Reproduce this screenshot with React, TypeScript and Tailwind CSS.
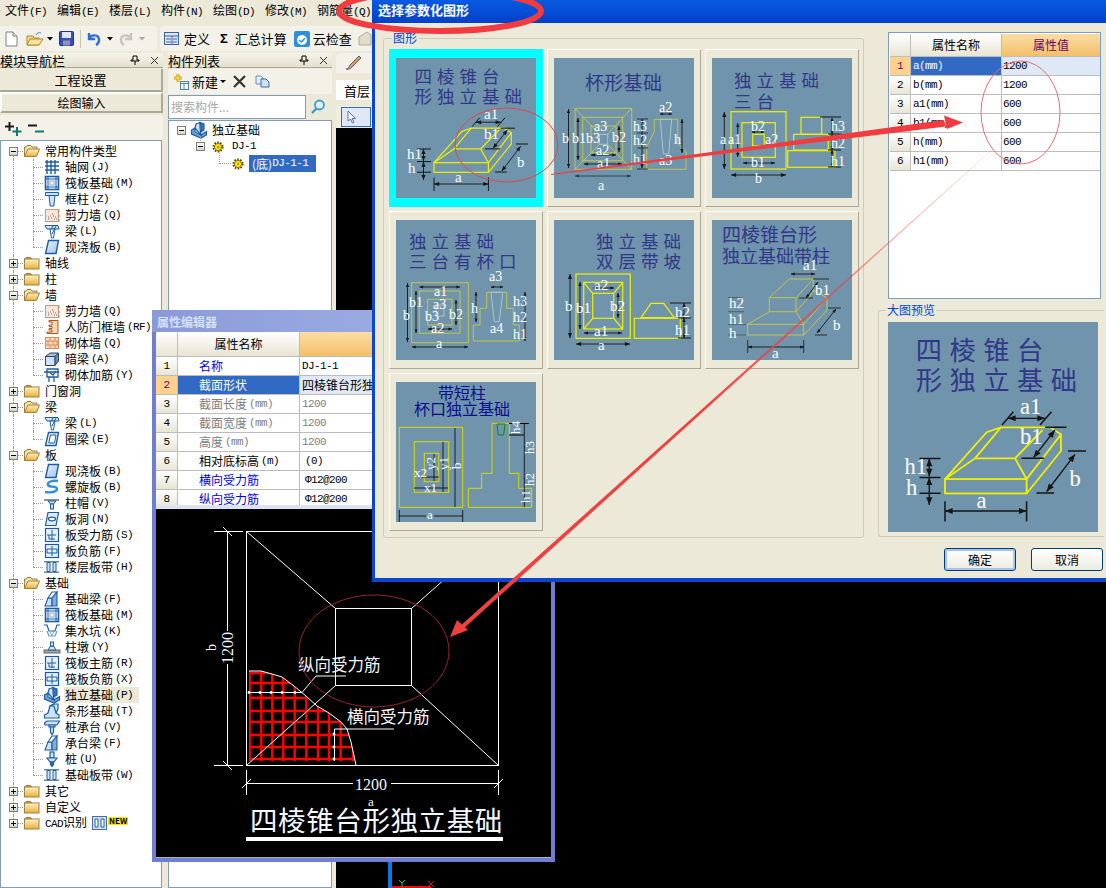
import React from "react";

const cjk = "font-['Noto_Sans_CJK_SC',sans-serif]";
const mono = "font-['Liberation_Mono',monospace] text-[11px] tracking-[-0.6px]";
const serif = "font-['Liberation_Serif',serif]";

// ---------- small diagram helpers ----------
const DIM = "#c4c44c";
const BRIGHT = "#f0f000";

function Box({ x1, y1, x2, y2, c = DIM, w = 1 }: { x1: number; y1: number; x2: number; y2: number; c?: string; w?: number }) {
    return <rect x={x1} y={y1} width={x2 - x1} height={y2 - y1} fill="none" stroke={c} strokeWidth={w} />;
}

function Ln({ d, c = DIM, w = 1 }: { d: string; c?: string; w?: number }) {
    return <path d={d} fill="none" stroke={c} strokeWidth={w} />;
}

function Dim({ x1, y1, x2, y2, c = "#151515", s = 3.4, w = 0.9 }: { x1: number; y1: number; x2: number; y2: number; c?: string; s?: number; w?: number }) {
    const a = Math.atan2(y2 - y1, x2 - x1);
    const head = (x: number, y: number, an: number) => {
        const bx = x + Math.cos(an) * s * 1.5;
        const by = y + Math.sin(an) * s * 1.5;
        const nx = -Math.sin(an) * s * 0.6;
        const ny = Math.cos(an) * s * 0.6;
        return `${x},${y} ${bx + nx},${by + ny} ${bx - nx},${by - ny}`;
    };
    return (
        <g>
            <line x1={x1} y1={y1} x2={x2} y2={y2} stroke={c} strokeWidth={w} />
            <polygon points={head(x1, y1, a)} fill={c} />
            <polygon points={head(x2, y2, a + Math.PI)} fill={c} />
        </g>
    );
}

function Lb({ x, y, t, s = 14, r }: { x: number; y: number; t: string; s?: number; r?: boolean }) {
    return (
        <text x={x} y={y} fontSize={s} fill="#fff" className={serif} transform={r ? `rotate(-90 ${x} ${y})` : undefined}>
            {t}
        </text>
    );
}

function Title({ x, y, t, s = 17.5, sp = 5, c = "#2c2f86" }: { x: number; y: number; t: string; s?: number; sp?: number; c?: string }) {
    return (
        <text x={x} y={y} fontSize={s} letterSpacing={sp} fill={c} opacity={0.9} className={cjk}>
            {t}
        </text>
    );
}

function Pic({ size = 140, children }: { size?: number; children: React.ReactNode }) {
    return (
        <svg width={size} height={size} viewBox="0 0 140 140" className="bg-[#7094ab] shrink-0">
            {children}
        </svg>
    );
}

function Frustum({ size }: { size?: number }) {
    return (
        <Pic size={size}>
            <Title x={18.5} y={25} t="四棱锥台" />
            <Title x={18.5} y={45} t="形独立基础" />
            <g stroke={BRIGHT} strokeWidth={1.2} fill="none">
                <rect x={38} y={104.7} width={54.4} height={9.6} />
                <path d="M38 104.7 L65.8 73.5 L75.3 70.2 L108 70.2 L115.3 74.9 L115.3 86 L92.4 114.3" />
                <path d="M38 104.7 L58 90.9 L84.7 90.9 L92.4 104.7 L115.3 74.9" />
                <path d="M58 90.9 L75.3 70.2 M84.7 90.9 L103 72" />
            </g>
            <g stroke="#151515" strokeWidth={1}>
                <path d="M21 91 H35 M21 103.6 H35 M21 114.2 H35 M38 119.5 V133 M92.4 119.5 V133 M76 68.7 L83.6 59.8 M101.3 68.7 L109 59.8 M104.7 70.2 H119 M89 90.9 H104 M120 86 H132 M99 114 H110.7" />
            </g>
            <Dim x1={27.5} y1={91} x2={27.5} y2={103} />
            <Dim x1={27.5} y1={103.6} x2={27.5} y2={122} />
            <Dim x1={38} y1={126} x2={92.4} y2={126} />
            <Dim x1={80} y1={64.2} x2={104.7} y2={64.2} />
            <Dim x1={111.3} y1={72} x2={97} y2={90.4} />
            <Dim x1={124.7} y1={88.2} x2={105.8} y2={113} />
            <Lb x={11} y={101} t="h1" s={15} />
            <Lb x={12} y={115} t="h" s={15} />
            <Lb x={59} y={124} t="a" s={15} />
            <Lb x={88} y={61} t="a1" s={15} />
            <Lb x={88} y={81} t="b1" s={15} />
            <Lb x={121} y={109} t="b" s={15} />
        </Pic>
    );
}

function Cup() {
    return (
        <Pic>
            <Title x={31} y={32} t="杯形基础" s={19} sp={0.3} />
            <Box x1={21} y1={50.3} x2={77.7} y2={111.3} />
            <Box x1={28.7} y1={59.3} x2={68.7} y2={102.7} />
            <Box x1={37} y1={68} x2={62} y2={94.7} />
            <Box x1={45.3} y1={76.3} x2={53.7} y2={86.3} c="#a5c8c8" />
            <Ln d="M21 50.3 L45.3 76.3 M77.7 50.3 L53.7 76.3 M21 111.3 L45.3 86.3 M77.7 111.3 L53.7 86.3" />
            <polygon points="100.3,61.3 123.7,61.3 123.7,85.3 132,93.7 132,111.3 92.7,111.3 92.7,88.7 100.3,73.7" fill="none" stroke={DIM} />
            <polygon points="106.3,61.3 117.7,61.3 114.7,96 109.3,96" fill="none" stroke="#a5c8c8" />
            <Dim x1={14.5} y1={51} x2={14.5} y2={110} s={2.6} />
            <Dim x1={24} y1={60} x2={24} y2={102} s={2.6} />
            <Dim x1={21} y1={118} x2={77} y2={118} s={2.6} c="#2a3a44" />
            <Dim x1={30} y1={106} x2={68} y2={106} s={2.6} />
            <Dim x1={37} y1={97} x2={62} y2={97} s={2.6} />
            <Dim x1={65} y1={68} x2={65} y2={94} s={2.6} />
            <Dim x1={88} y1={61} x2={88} y2={110} s={2.6} />
            <Dim x1={128} y1={61} x2={128} y2={95} s={2.6} />
            <Dim x1={106} y1={56} x2={118} y2={56} s={2} />
            <Ln d="M83 61 H94 M83 75 H94 M83 90 H94 M83 111 H94" c="#222" w={0.8} />
            <Lb x={8} y={85} t="b" />
            <Lb x={18} y={85} t="b1" />
            <Lb x={32} y={85} t="b3" />
            <Lb x={40} y={73} t="a3" />
            <Lb x={58} y={84} t="b2" />
            <Lb x={42} y={97} t="a2" />
            <Lb x={43} y={110} t="a1" />
            <Lb x={44} y={132} t="a" />
            <Lb x={79} y={73} t="h3" />
            <Lb x={79} y={87} t="h2" />
            <Lb x={79} y={106} t="h1" />
            <Lb x={105} y={54} t="a2" />
            <Lb x={120} y={86} t="h" />
            <Lb x={105} y={107} t="a3" />
        </Pic>
    );
}

function ThreeStep() {
    return (
        <Pic>
            <Title x={22} y={29} t="独立基础" />
            <Title x={22} y={50} t="三台" />
            <Box x1={19} y1={53.7} x2={74} y2={111} c={BRIGHT} w={1.2} />
            <Box x1={30} y1={64.7} x2={63.3} y2={99.3} c={BRIGHT} w={1.2} />
            <Box x1={40.7} y1={76.3} x2={52.3} y2={87.7} c={BRIGHT} w={1.2} />
            <Box x1={89} y1={59.3} x2={109.7} y2={76.3} c={BRIGHT} w={1.2} />
            <Box x1={81.7} y1={76.3} x2={116.3} y2={92} c={BRIGHT} w={1.2} />
            <Box x1={75.7} y1={92.7} x2={123} y2={109.3} c={BRIGHT} w={1.2} />
            <Dim x1={12.3} y1={54} x2={12.3} y2={111} />
            <Dim x1={25.7} y1={65} x2={25.7} y2={99} s={2.6} />
            <Dim x1={19} y1={117} x2={74} y2={117} />
            <Dim x1={31} y1={105} x2={63} y2={105} s={2.6} />
            <Dim x1={40} y1={74} x2={52} y2={74} s={2} />
            <Dim x1={120} y1={60} x2={120} y2={76} s={2.4} />
            <Dim x1={120} y1={76} x2={120} y2={92} s={2.4} />
            <Dim x1={120} y1={92} x2={120} y2={109} s={2.4} />
            <Ln d="M108 59 H129 M116 76 H129 M116 92 H129 M116 109 H129" c="#151515" />
            <Lb x={8} y={86} t="a" />
            <Lb x={16} y={86} t="a1" />
            <Lb x={39} y={73} t="b2" />
            <Lb x={53} y={86} t="a2" />
            <Lb x={39} y={109} t="b1" />
            <Lb x={43} y={125} t="b" />
            <Lb x={119} y={73} t="h3" />
            <Lb x={119} y={90} t="h2" />
            <Lb x={119} y={108} t="h1" />
        </Pic>
    );
}

function ThreeStepCup() {
    return (
        <Pic>
            <Title x={13} y={28} t="独立基础" />
            <Title x={13} y={48} t="三台有杯口" />
            <Box x1={15.7} y1={62.7} x2={72.3} y2={122.7} />
            <Box x1={23.3} y1={71} x2={64} y2={113.3} />
            <Box x1={31.7} y1={79.3} x2={56} y2={105} />
            <Box x1={40} y1={85} x2={48} y2={96} c="#a5c8c8" />
            <polygon points="90.7,72.3 110.7,72.3 110.7,88.3 117.3,88.3 117.3,105 123.3,105 123.3,121 77.3,121 77.3,105 84,105 84,88.3 90.7,88.3" fill="none" stroke={DIM} />
            <polygon points="95,72.3 106.7,72.3 103.3,101.7 98.3,101.7" fill="none" stroke="#a5c8c8" />
            <Dim x1={11.5} y1={63} x2={11.5} y2={122} s={2.6} />
            <Dim x1={20} y1={71} x2={20} y2={113} s={2.4} />
            <Dim x1={16} y1={127} x2={72} y2={127} s={2.4} />
            <Dim x1={23.5} y1={67} x2={64} y2={67} s={2.4} />
            <Dim x1={32} y1={109} x2={56} y2={109} s={2.4} />
            <Dim x1={60} y1={80} x2={60} y2={105} s={2.4} />
            <Dim x1={80} y1={72} x2={80} y2={102} s={2.4} />
            <Dim x1={95} y1={67} x2={107} y2={67} s={2} />
            <Dim x1={129} y1={72} x2={129} y2={121} s={2.4} />
            <Lb x={93} y={61} t="a3" />
            <Lb x={75} y={93} t="h" />
            <Lb x={117} y={86} t="h3" />
            <Lb x={117} y={102} t="h2" />
            <Lb x={117} y={119} t="h1" />
            <Lb x={94} y={113} t="a4" />
            <Lb x={38} y={76} t="a1" />
            <Lb x={13} y={87} t="b1" />
            <Lb x={37} y={89} t="a3" />
            <Lb x={29} y={101} t="b3" />
            <Lb x={53} y={99} t="b2" />
            <Lb x={35} y={113} t="a2" />
            <Lb x={7} y={100} t="b" />
            <Lb x={40} y={128} t="a" />
        </Pic>
    );
}

function TwoLayer() {
    return (
        <Pic>
            <Title x={42} y={28} t="独立基础" />
            <Title x={42} y={48} t="双层带坡" />
            <Box x1={22} y1={54} x2={76.3} y2={118.3} c={BRIGHT} w={1.2} />
            <Box x1={29.7} y1={62.3} x2={68.7} y2={109} c={BRIGHT} w={1.2} />
            <Box x1={38.7} y1={73.3} x2={59.7} y2={98.3} c={BRIGHT} w={1.2} />
            <Ln d="M29.7 62.3 L38.7 73.3 M68.7 62.3 L59.7 73.3 M29.7 109 L38.7 98.3 M68.7 109 L59.7 98.3" c={BRIGHT} w={1.2} />
            <Box x1={80.3} y1={98.3} x2={126.3} y2={118.3} c={BRIGHT} w={1.2} />
            <polygon points="87,97.7 97,83.3 109.7,83.3 120.3,97.7" fill="none" stroke={BRIGHT} strokeWidth={1.2} />
            <Dim x1={16} y1={54} x2={16} y2={118} />
            <Dim x1={26} y1={62} x2={26} y2={109} s={2.6} />
            <Dim x1={39} y1={68} x2={60} y2={68} s={2.4} />
            <Dim x1={64} y1={73} x2={64} y2={98} s={2.6} />
            <Dim x1={30} y1={113} x2={68} y2={113} s={2.6} />
            <Dim x1={22} y1={124} x2={76} y2={124} />
            <Dim x1={130} y1={83} x2={130} y2={98} s={2.6} />
            <Dim x1={130} y1={98} x2={130} y2={118} s={2.6} />
            <Ln d="M116 83 H137 M124 98 H137 M124 118 H137" c="#151515" />
            <Lb x={11} y={91} t="b" s={15} />
            <Lb x={22} y={93} t="b1" s={15} />
            <Lb x={40} y={70} t="a2" s={15} />
            <Lb x={56} y={91} t="b2" s={15} />
            <Lb x={40} y={116} t="a1" s={15} />
            <Lb x={44} y={130} t="a" s={15} />
            <Lb x={121} y={97} t="h2" s={15} />
            <Lb x={121} y={115} t="h1" s={15} />
        </Pic>
    );
}

function FrustumColumn() {
    return (
        <Pic>
            <Title x={10} y={22} t="四棱锥台形" s={19} sp={0} />
            <Title x={10} y={43} t="独立基础带柱" s={18} sp={0} />
            <Box x1={35.7} y1={104.3} x2={91.7} y2={115} />
            <Box x1={57.3} y1={77.7} x2={84} y2={91.7} />
            <Ln d="M57.3 77.7 L77.3 59 H101.3 L84 77.7 M101.3 59 V72 L84 91.7 M35.7 104.3 L57.3 91.7 M91.7 104.3 L84 91.7 M91.7 104.3 L115 78 L101 70 M115 78 V90 L91.7 115" />
            <Dim x1={79} y1={54} x2={103} y2={54} s={2.6} />
            <Dim x1={106} y1={62} x2={94} y2={78} s={2.6} />
            <Dim x1={124} y1={89} x2={105} y2={113} s={2.6} />
            <Dim x1={36} y1={127} x2={92} y2={127} s={2.6} />
            <Ln d="M35.7 120 V133 M91.7 120 V133 M101 59 H117 M87 78 H101 M116 88 H129 M103 115 H115" c="#151515" w={0.8} />
            <Ln d="M16 77.7 H30 M16 91.7 H32 M16 104.3 H34 M16 115 H34" c="#3b4a55" w={0.7} />
            <Lb x={91} y={50} t="a1" s={15} />
            <Lb x={17} y={88} t="h2" s={15} />
            <Lb x={17} y={104} t="h1" s={15} />
            <Lb x={17} y={118} t="h" s={15} />
            <Lb x={103} y={75} t="b1" s={15} />
            <Lb x={121} y={110} t="b" s={15} />
            <Lb x={60} y={138} t="a" s={15} />
        </Pic>
    );
}

function ShortColumn() {
    const blue = "#00008b";
    return (
        <Pic>
            <Title x={42} y={17} t="带短柱" s={16} sp={0} c={blue} />
            <Title x={18} y={33} t="杯口独立基础" s={16} sp={0} c={blue} />
            <Box x1={3.3} y1={45.3} x2={66.7} y2={125.3} c="#dada00" />
            <Box x1={18.3} y1={59.7} x2={52.7} y2={110.3} c="#dada00" />
            <Box x1={28.3} y1={71.3} x2={42.7} y2={99.7} c="#dada00" />
            <polygon points="96,41.3 113.3,41.3 113.3,91.3 122.7,91.3 122.7,106.3 135.7,106.3 135.7,125.3 72.3,125.3 72.3,106.3 85.7,106.3 85.7,91.3 96,91.3" fill="none" stroke="#dada00" />
            <polygon points="101,42 109,42 107.7,53 102.3,53" fill="none" stroke="#0a8a0a" />
            <Ln d="M113 41.5 H133 M113 53 H128" c="#000" />
            <Ln d="M59 46 V125 M47 60 V110 M38 72 V99 M128.3 41 V125 M18 106 H52 M26 95 H43 M3.3 128 V140 M66.7 128 V140 M3.3 134 H30 M38 134 H66.7" c="#000" w={0.8} />
            <Lb x={124} y={52} t="h4" s={13} r />
            <Lb x={138} y={72} t="h3" s={13} r />
            <Lb x={138} y={104} t="h2" s={13} r />
            <Lb x={134} y={121} t="h1" s={13} r />
            <Lb x={65} y={87} t="b" s={13} r />
            <Lb x={52} y={88} t="y1" s={13} r />
            <Lb x={39} y={88} t="y2" s={13} r />
            <Lb x={18} y={95} t="x2" s={13} />
            <Lb x={28} y={110} t="x1" s={13} />
            <Lb x={31} y={137} t="a" s={13} />
        </Pic>
    );
}

// ---------- tree icons ----------
const B = "#1b5ca8";
const L = "#cfe3f7";

const treeIcons: Record<string, React.ReactNode> = {
    grid: <path d="M1 3H15M1 7H15M1 11H15M3 1V15M7 1V15M11 1V15" stroke={B} strokeWidth={1.4} />,
    raft: (
        <g fill="none" stroke={B}>
            <rect x="1.5" y="1.5" width="13" height="13" strokeWidth={1.6} />
            <path d="M4 1V15M12 1V15M1 4H15M1 12H15" />
            <rect x="6" y="6" width="4" height="4" stroke="#8ab" />
        </g>
    ),
    column: (
        <g stroke={B} fill={L}>
            <path d="M1.5 1.5H14.5V4.5H1.5Z" />
            <path d="M5 4.5H11L9.8 15H6.2Z" />
        </g>
    ),
    wall: (
        <g>
            <rect x="1.5" y="2.5" width="13" height="12" fill="#f4e6da" stroke="#c89a7a" />
            <path d="M4 12h1M7 11h1M10 12h1M6 9h1M9 9h1M11 10h1M4 10h1M8 7h1M12 12h1" stroke="#777" />
            <path d="M15 3v2M15 8v2M15 12v2" stroke="#e0701c" />
        </g>
    ),
    beam: (
        <g stroke={B} fill={L}>
            <path d="M1 2.5H14L15 6H3Z" />
            <path d="M6 6H11L9.5 15H7.5Z" fill="#fff" />
            <path d="M9.5 2.5L7 6M12 3L8 11" />
        </g>
    ),
    slab: <path d="M4.5 1.5H14.5L12 14.5H1.5Z" fill="url(#slabFill)" stroke={B} strokeWidth={1.4} />,
    door: <path d="M5 1.5H14V14.5H3V13H8V11H5V9.5H8V7.5H5V6H8V3H5Z" fill="#f1d9b4" stroke="#b8541a" />,
    brick: (
        <g fill="#f7d9c0" stroke="#e08a50">
            <rect x="1.5" y="2.5" width="13" height="11" />
            <path d="M1.5 6H14.5M1.5 10H14.5M6 2.5V6M11 2.5V6M4 6V10M9 6V10M13 6V10M6 10V13.5M11 10V13.5" fill="none" />
        </g>
    ),
    darkbeam: (
        <g stroke="#345" fill={L}>
            <path d="M1.5 5.5L6 2H14.5L11 5.5Z" fill="#9fc3e6" />
            <path d="M1.5 5.5H11V14.5H1.5Z" />
            <path d="M11 5.5L14.5 2V10L11 14.5Z" fill="#5a8fc8" />
        </g>
    ),
    rebar: (
        <g fill="none" stroke={B} strokeWidth={1.3}>
            <path d="M0 5H15M3 2H14V10H3Z" />
            <path d="M5 10V15M10 10V15M5 5L9 8L12 4" />
        </g>
    ),
    ring: (
        <g fill="#e8f2fb" stroke={B} strokeWidth={1.4}>
            <path d="M4.5 1.5H14.5L12 14.5H1.5Z" />
            <path d="M6.5 4H12L10.5 12H4.8Z" fill="#fff" strokeWidth={1} />
        </g>
    ),
    spiral: <path d="M14 2C8 1 3 3 4 6C5 9 13 6 13 10C13 13 6 14 1 13" fill="none" stroke="#2f8fe0" strokeWidth={2.4} />,
    cap: (
        <g>
            <rect x="0" y="4" width="15" height="2" fill="#909090" />
            <path d="M4 6H12L9.5 9H6.5Z" fill={L} stroke={B} />
            <rect x="6.5" y="9" width="3" height="5" fill={L} stroke={B} />
        </g>
    ),
    hole: (
        <g stroke={B} strokeWidth={1.2}>
            <path d="M4 1.5H14.5L12 14.5H1.5Z" fill="#dcebfa" />
            <ellipse cx="8" cy="8" rx="3.5" ry="1.8" fill="#fff" />
        </g>
    ),
    bar: (
        <g fill="#e8f2fb" stroke={B}>
            <rect x="1.5" y="1.5" width="13" height="13" strokeWidth={1.2} />
            <path d="M8 3V13M3 8H12M5 8V12H11" fill="none" />
        </g>
    ),
    neg: (
        <g fill="#e8f2fb" stroke={B}>
            <rect x="1.5" y="1.5" width="13" height="13" strokeWidth={1.2} />
            <path d="M3 6H13V10H3ZM8 3V13" fill="none" />
        </g>
    ),
    strip: (
        <g>
            <rect x="0" y="2" width="15" height="1.5" fill="#6b85a5" />
            <rect x="0" y="12.5" width="15" height="1.5" fill="#6b85a5" />
            <path d="M3 3.5H6V12.5H3ZM9 3.5H12V12.5H9Z" fill={L} stroke={B} />
        </g>
    ),
    fbeam: (
        <g stroke={B} fill={L} strokeWidth={1.1}>
            <path d="M1 15L4 7H8V15Z" />
            <path d="M4 7L8 1H13L8 7Z" fill="#fff" />
            <path d="M8 7L13 1V15H8Z" fill="#7eaede" />
        </g>
    ),
    pit: (
        <g fill="none" stroke={B} strokeWidth={1.2}>
            <path d="M0 2H3L5 8H11L13 2H16" />
            <path d="M3 8L5 13H11L13 8" stroke="#5a9ad8" />
            <path d="M6 10h1M8 11h1M9 9h1M7 12h1" stroke="#457" />
        </g>
    ),
    pier: (
        <g>
            <rect x="0" y="11" width="16" height="3" fill="#a4a4a4" stroke="#666" />
            <path d="M4 11L6.5 7H9.5L12 11Z" fill={L} stroke={B} />
            <rect x="6.5" y="3" width="3" height="4" fill={L} stroke={B} />
        </g>
    ),
    iso: (
        <g stroke={B} strokeWidth={1.2}>
            <path d="M0.5 8L4 6V10L10 13L15.5 9.5V13L10 16L0.5 12Z" fill="#6fa3d8" />
            <path d="M4 6L5 2L9 .5V6L10 13Z" fill={L} />
            <path d="M9 .5L13 2V8L10 10V4Z" fill="#3a78c0" />
        </g>
    ),
    stripf: (
        <g stroke={B} fill={L} strokeWidth={1.2}>
            <path d="M0.5 15V12L4 10L6 3L10 1H14V6L12 10L15 12V15Z" />
            <path d="M6 3H10L12 10M10 1L6 3" fill="none" />
        </g>
    ),
    pilecap: (
        <g stroke={B} fill={L} strokeWidth={1.2}>
            <path d="M0.5 4L3 2H15.5L13 6H1Z" />
            <path d="M5 6H11V8H5Z" />
            <path d="M6.5 8H9.5V13L8 15.5L6.5 13Z" />
        </g>
    ),
    pile: (
        <g stroke={B} fill={L} strokeWidth={1.2}>
            <rect x="6" y="1" width="4" height="6" />
            <path d="M3 7H13L10 11H6Z" />
            <path d="M6.5 11H9.5V13.5L8 15.5L6.5 13.5Z" fill="#2f6fb8" />
        </g>
    ),
};

function TreeIcon({ k }: { k: string }) {
    return (
        <svg width="16" height="16" viewBox="0 0 16 16" className="shrink-0 overflow-visible">
            <defs>
                <linearGradient id="slabFill" x1="0" y1="0" x2="1" y2="1">
                    <stop offset="0" stopColor="#eaf3fc" />
                    <stop offset="1" stopColor="#9cc4ec" />
                </linearGradient>
            </defs>
            {treeIcons[k]}
        </svg>
    );
}

function Gear() {
    return (
        <svg width="12" height="12" viewBox="0 0 12 12" className="shrink-0">
            <circle cx="6" cy="6" r="4.6" fill="none" stroke="#5a4a00" strokeWidth={2} strokeDasharray="1.6 1.3" />
            <circle cx="6" cy="6" r="3.6" fill="#ffe800" stroke="#6a5a00" strokeWidth={0.8} />
            <circle cx="6" cy="6" r="1.2" fill="#b89a00" />
        </svg>
    );
}

function Folder({ open }: { open: boolean }) {
    return (
        <svg width="16" height="14" viewBox="0 0 16 14" className="shrink-0">
            <defs>
                <linearGradient id="folderFill" x1="0" y1="0" x2="0" y2="1">
                    <stop offset="0" stopColor="#fff2c0" />
                    <stop offset="1" stopColor="#e8b040" />
                </linearGradient>
            </defs>
            {open ? (
                <>
                    <path d="M.5 12.5V3H2L3 1.5H7L8 3H13V5" fill="#f4e2a4" stroke="#a08040" />
                    <path d="M.5 12.5L4 5H15.5L12.5 12.5Z" fill="url(#folderFill)" stroke="#a08040" />
                </>
            ) : (
                <>
                    <path d="M.5 3L2 1.5H6.5L8 3Z" fill="#e6c870" stroke="#a08040" />
                    <rect x=".5" y="3" width="14.5" height="10" fill="url(#folderFill)" stroke="#a08040" />
                </>
            )}
        </svg>
    );
}

function Expander({ open }: { open: boolean }) {
    return (
        <span className="relative z-10 block h-[9px] w-[9px] border border-[#7f7f7f] bg-gradient-to-b from-white to-[#d8d4c4]">
            <span className="absolute left-[1px] top-[3px] h-px w-[5px] bg-black" />
            {!open && <span className="absolute left-[3px] top-[1px] h-[5px] w-px bg-black" />}
        </span>
    );
}

// ---------- left tree data ----------
type Item = { name: string; code: string; icon: string };
type Group = { name: string; open: boolean; items?: Item[]; extra?: boolean };

const groups: Group[] = [
    {
        name: "常用构件类型",
        open: true,
        items: [
            { name: "轴网", code: "(J)", icon: "grid" },
            { name: "筏板基础", code: "(M)", icon: "raft" },
            { name: "框柱", code: "(Z)", icon: "column" },
            { name: "剪力墙", code: "(Q)", icon: "wall" },
            { name: "梁", code: "(L)", icon: "beam" },
            { name: "现浇板", code: "(B)", icon: "slab" },
        ],
    },
    { name: "轴线", open: false },
    { name: "柱", open: false },
    {
        name: "墙",
        open: true,
        items: [
            { name: "剪力墙", code: "(Q)", icon: "wall" },
            { name: "人防门框墙", code: "(RF)", icon: "door" },
            { name: "砌体墙", code: "(Q)", icon: "brick" },
            { name: "暗梁", code: "(A)", icon: "darkbeam" },
            { name: "砌体加筋", code: "(Y)", icon: "rebar" },
        ],
    },
    { name: "门窗洞", open: false },
    {
        name: "梁",
        open: true,
        items: [
            { name: "梁", code: "(L)", icon: "beam" },
            { name: "圈梁", code: "(E)", icon: "ring" },
        ],
    },
    {
        name: "板",
        open: true,
        items: [
            { name: "现浇板", code: "(B)", icon: "slab" },
            { name: "螺旋板", code: "(B)", icon: "spiral" },
            { name: "柱帽", code: "(V)", icon: "cap" },
            { name: "板洞", code: "(N)", icon: "hole" },
            { name: "板受力筋", code: "(S)", icon: "bar" },
            { name: "板负筋", code: "(F)", icon: "neg" },
            { name: "楼层板带", code: "(H)", icon: "strip" },
        ],
    },
    {
        name: "基础",
        open: true,
        items: [
            { name: "基础梁", code: "(F)", icon: "fbeam" },
            { name: "筏板基础", code: "(M)", icon: "raft" },
            { name: "集水坑", code: "(K)", icon: "pit" },
            { name: "柱墩", code: "(Y)", icon: "pier" },
            { name: "筏板主筋", code: "(R)", icon: "bar" },
            { name: "筏板负筋", code: "(X)", icon: "neg" },
            { name: "独立基础", code: "(P)", icon: "iso" },
            { name: "条形基础", code: "(T)", icon: "stripf" },
            { name: "桩承台", code: "(V)", icon: "pilecap" },
            { name: "承台梁", code: "(F)", icon: "fbeam" },
            { name: "桩", code: "(U)", icon: "pile" },
            { name: "基础板带", code: "(W)", icon: "strip" },
        ],
    },
    { name: "其它", open: false },
    { name: "自定义", open: false },
    { name: "识别", open: false, extra: true },
];

const dots = "border-dotted border-[#9a9a9a]";

function NavTree() {
    return (
        <div className="h-full border border-[#7f9db9] bg-white pt-[2px]">
            {groups.map((g, gi) => {
                const lastGroup = gi === groups.length - 1;
                return (
                    <div key={gi}>
                        <div className="relative flex h-4 items-center">
                            <div className={`absolute left-[12px] w-0 border-l ${dots} ${gi === 0 ? "top-2" : "top-0"} ${lastGroup ? "bottom-2" : "bottom-0"}`} />
                            <div className={`absolute left-[12px] top-2 w-[12px] border-t ${dots}`} />
                            <div className="ml-[8px] w-[15px]">
                                <Expander open={g.open} />
                            </div>
                            <Folder open={g.open} />
                            <span className="ml-[5px] whitespace-nowrap">
                                {g.extra && <span className={mono}>CAD</span>}
                                {g.name}
                            </span>
                            {g.extra && (
                                <>
                                    <svg width="15" height="14" viewBox="0 0 15 14" className="ml-[5px]">
                                        <rect x=".5" y=".5" width="14" height="13" fill="#cfe3f7" stroke="#4a6a9a" />
                                        <path d="M3 3H6V11H3ZM9 3H12V11H9Z" fill="#fff" stroke="#1b5ca8" />
                                    </svg>
                                    <span className="ml-[1px] -mt-[5px] bg-[#ffe600] px-[1px] text-[8px] font-bold leading-[8px] text-black">NEW</span>
                                </>
                            )}
                        </div>
                        {g.items?.map((it, i) => {
                            const last = i === g.items!.length - 1;
                            return (
                                <div key={i} className="relative flex h-4 items-center">
                                    <div className={`absolute left-[12px] top-0 bottom-0 border-l ${dots}`} />
                                    <div className={`absolute left-[32px] top-0 border-l ${dots} ${last ? "bottom-2" : "bottom-0"}`} />
                                    <div className={`absolute left-[32px] top-2 w-[10px] border-t ${dots}`} />
                                    <div className="ml-[43px]">
                                        <TreeIcon k={it.icon} />
                                    </div>
                                    <span className={`ml-[4px] flex h-4 items-center whitespace-nowrap pl-[1px] pr-[6px] ${it.name === "独立基础" ? "bg-[#ece9d8]" : ""}`}>
                                        {it.name}
                                        <span className={`${mono} ml-[2px]`}>{it.code}</span>
                                    </span>
                                </div>
                            );
                        })}
                    </div>
                );
            })}
        </div>
    );
}

function PanelHeader({ title }: { title: string }) {
    return (
        <div className="flex h-[15px] items-center border-b border-[#aca899] bg-gradient-to-b from-[#f6f4ea] to-[#e4e0cd]">
            <span className="flex-1 text-[13px] whitespace-nowrap">{title}</span>
            <svg width="10" height="10" viewBox="0 0 10 10" className="mr-[10px]">
                <path d="M3 1H7V5H9V6H1V5H3ZM5 6V10" fill="none" stroke="#000" />
            </svg>
            <svg width="9" height="9" viewBox="0 0 9 9" className="mr-[4px]">
                <path d="M1 1L8 8M8 1L1 8" stroke="#333" />
            </svg>
        </div>
    );
}

function NavPanel() {
    return (
        <div className="flex h-full w-[163px] shrink-0 flex-col">
            <PanelHeader title="模块导航栏" />
            <button className="mt-[1px] h-[23px] shrink-0 border-b-2 border-r-2 border-[#aca899] border-t-white bg-[#ece9d8] text-[13px]">工程设置</button>
            <button className="h-[21px] shrink-0 border-2 border-b-[#aca899] border-l-white border-r-[#aca899] border-t-white bg-[#ece9d8] text-[12px]">绘图输入</button>
            <div className="mt-[2px] flex h-[25px] shrink-0 items-center gap-[6px] rounded-t bg-[#f4f2e8] pl-[5px]">
                <svg width="17" height="16" viewBox="0 0 17 16">
                    <path d="M4.5 2V11M0 6.5H9" stroke="#1a1a1a" strokeWidth={2} />
                    <path d="M12 7V16M7.5 11.5H16.5" stroke="#0a7a70" strokeWidth={2} />
                </svg>
                <svg width="17" height="16" viewBox="0 0 17 16">
                    <path d="M0 5.5H9" stroke="#1a1a1a" strokeWidth={2} />
                    <path d="M7 11.5H16" stroke="#0a7a70" strokeWidth={2} />
                </svg>
            </div>
            <div className="min-h-0 flex-1 pr-[1px]">
                <NavTree />
            </div>
        </div>
    );
}

function ListPanel() {
    return (
        <div className="ml-[5px] flex h-full w-[164px] shrink-0 flex-col">
            <PanelHeader title="构件列表" />
            <div className="mt-[1px] flex h-[25px] shrink-0 items-center rounded-t bg-[#f4f2e8] pl-[5px]">
                <svg width="16" height="18" viewBox="0 0 16 18">
                    <path d="M5 1V9M1 5H9" stroke="#c8a010" strokeWidth={3} />
                    <path d="M5 1V9M1 5H9" stroke="#fff060" strokeWidth={1} />
                    <rect x="7.5" y="8.5" width="8" height="8" fill="#fff" stroke="#4a80c0" />
                    <path d="M8 10.5H15M11 11V16" stroke="#4a80c0" />
                </svg>
                <span className="ml-[3px] text-[13px]">新建</span>
                <span className="ml-[2px] h-0 w-0 border-x-[3px] border-t-[3px] border-x-transparent border-t-black" />
                <svg width="13" height="13" viewBox="0 0 13 13" className="ml-[7px]">
                    <path d="M1 1L12 12M12 1L1 12" stroke="#333" strokeWidth={2.2} />
                </svg>
                <svg width="15" height="13" viewBox="0 0 15 13" className="ml-[9px]">
                    <path d="M1 1H6L8 3V9H1Z" fill="#e4eefa" stroke="#6a8ab8" />
                    <path d="M6 4H11L14 7V12H6Z" fill="#cfe0f5" stroke="#3a68a8" />
                </svg>
            </div>
            <div className="flex h-[26px] shrink-0 items-center">
                <div className="flex h-[24px] w-[138px] items-center border border-[#7f9db9] bg-white pl-[2px] text-[#a8a8a8]">搜索构件...</div>
                <svg width="16" height="16" viewBox="0 0 16 16" className="ml-[4px]">
                    <circle cx="9.5" cy="6" r="4.5" fill="#dff1ff" stroke="#3a9ad8" strokeWidth={1.8} />
                    <path d="M6.5 9.5L2 14" stroke="#3a9ad8" strokeWidth={2.4} />
                </svg>
            </div>
            <div className="min-h-0 flex-1 border border-[#7f9db9] bg-white pt-[1px]">
                <div className="relative flex h-[16px] items-center pl-[8px]">
                    <Expander open />
                    <div className="ml-[5px]">
                        <TreeIcon k="iso" />
                    </div>
                    <span className="ml-[5px]">独立基础</span>
                </div>
                <div className="relative flex h-[17px] items-center pl-[27px]">
                    <div className={`absolute left-[31px] -top-px bottom-2 border-l ${dots}`} />
                    <Expander open />
                    <span className="ml-[7px]">
                        <Gear />
                    </span>
                    <span className={`${mono} ml-[8px]`}>DJ-1</span>
                </div>
                <div className="relative flex h-[17px] items-center pl-[63px]">
                    <div className={`absolute left-[50px] -top-2 bottom-2 border-l ${dots}`} />
                    <div className={`absolute left-[50px] top-2 w-[12px] border-t ${dots}`} />
                    <Gear />
                    <span className="ml-[5px] flex h-[17px] w-[67px] items-center bg-[#316ac5] pl-[3px] text-white">
                        (底)<span className={mono}>DJ-1-1</span>
                    </span>
                </div>
            </div>
        </div>
    );
}

function CadArea() {
    return (
        <div className="ml-[4px] flex h-full min-w-0 flex-1 flex-col">
            <div className="flex h-[20px] shrink-0 items-center rounded-tl bg-[#f4f2e8] pl-[8px]">
                <svg width="18" height="16" viewBox="0 0 18 16">
                    <path d="M2 14C4 14 5 12 6 10L15 1L17 3L8 12C7 13 5 15 2 14Z" fill="#d8a050" stroke="#5a5a90" />
                </svg>
            </div>
            <div className="mt-[7px] flex h-[20px] shrink-0 items-center bg-white pl-[8px] text-[13px]">首层</div>
            <div className="mt-[6px] flex h-[22px] shrink-0 items-center bg-[#f0eee0] pl-[5px]">
                <div className="flex h-[20px] w-[30px] items-center border border-[#316ac5] bg-[#dfe8f6] pl-[5px]">
                    <svg width="10" height="14" viewBox="0 0 10 14">
                        <path d="M1 1V11L3.5 9L5.5 13L7 12L5 8.5H8.5Z" fill="#fff" stroke="#6070a0" />
                    </svg>
                </div>
            </div>
            <div className="min-h-0 flex-1 bg-black" />
        </div>
    );
}

// ---------- property window ----------
const propRows = [
    { n: "名称", v: "DJ-1-1", c: "text-[#0000ee]" },
    { n: "截面形状", v: "四棱锥台形独立基础", sel: true },
    { n: "截面长度", u: "(mm)", v: "1200", c: "text-[#808080]" },
    { n: "截面宽度", u: "(mm)", v: "1200", c: "text-[#808080]" },
    { n: "高度", u: "(mm)", v: "1200", c: "text-[#808080]" },
    { n: "相对底标高", u: "(m)", v: "(0)", in: true },
    { n: "横向受力筋", v: "Φ12@200", c: "text-[#0000ee]", in: true },
    { n: "纵向受力筋", v: "Φ12@200", c: "text-[#0000ee]", in: true },
];

function PropertyWindow() {
    return (
        <div className="absolute left-[152px] top-[310px] flex h-[552px] w-[403px] flex-col border-[4px] border-t-0 border-[#6d7fd2] bg-[#b8c4e8]">
            <div className="-mx-[4px] flex h-[22px] shrink-0 items-center bg-gradient-to-r from-[#8a9ad8] to-[#a8b8e8] pl-[5px] pt-[1px] text-[12px] font-bold text-[#d6e0f8]">属性编辑器</div>
            <div className="h-[173px] shrink-0 overflow-hidden bg-white">
                <div className="flex h-[25px] border-b border-[#bdbdbd]">
                    <div className="w-[22px] border-r border-[#bdbdbd] bg-gradient-to-b from-white to-[#e8e5d4]" />
                    <div className="flex w-[122px] items-center justify-center border-r border-[#bdbdbd] bg-gradient-to-b from-white to-[#e8e5d4] text-[12px]">属性名称</div>
                    <div className="flex-1 bg-gradient-to-b from-[#fbdda4] to-[#f3c068]" />
                </div>
                {propRows.map((r, i) => (
                    <div key={i} className="flex h-[19px] border-b border-[#bdbdbd]">
                        <div className={`flex w-[22px] items-center justify-center border-r border-[#bdbdbd] ${mono} ${r.sel ? "bg-[#fdd28c] text-[#6a006a]" : "bg-gradient-to-b from-white to-[#e8e5d4]"}`}>{i + 1}</div>
                        <div className={`flex w-[122px] items-center border-r border-[#bdbdbd] pl-[21px] whitespace-nowrap ${r.sel ? "bg-[#316ac5] text-white" : r.c ?? ""}`}>
                            {r.n}
                            {r.u && <span className={`${mono} ml-[2px]`}>{r.u}</span>}
                        </div>
                        <div className={`flex flex-1 items-center whitespace-nowrap ${r.in ? "pl-[5px]" : "pl-[2px]"} ${r.sel ? "bg-[#dfe8f6]" : ""} ${r.c === "text-[#808080]" ? "text-[#808080]" : ""}`}>
                            <span className={r.sel ? "" : mono}>{r.v}</span>
                        </div>
                    </div>
                ))}
            </div>
            <div className="h-[4px] shrink-0 bg-[#dbe2f2]" />
            <div className="min-h-0 flex-1 bg-black">
                <CadDrawing />
            </div>
            <div className="h-[1px] shrink-0 bg-[#b0b0b0]" />
        </div>
    );
}

function CadDrawing() {
    const rebarV = [250.7, 262.3, 273.3, 284.3, 295.7, 307.3, 319, 330, 341.7, 354];
    const rebarH = [674, 684, 699, 712, 723, 736, 748, 760];
    const outline = "250,672 262,672 273,675 283,678 295,687 307,697 318,707 330,714 342,723 348,730 352,743 357,766 250,766";
    return (
        <svg width="395" height="347" viewBox="157 510 395 347" className="block">
            <defs>
                <clipPath id="hatchClip">
                    <polygon points={outline} />
                </clipPath>
            </defs>
            <g clipPath="url(#hatchClip)" stroke="#ff0000" strokeWidth={2.4}>
                {rebarV.map((x) => (
                    <line key={x} x1={x} y1={665} x2={x} y2={762} />
                ))}
                {rebarH.map((y) => (
                    <line key={y} x1={248} y1={y} x2={360} y2={y} />
                ))}
            </g>
            <g stroke="#fff" strokeWidth={1} fill="none">
                <rect x={247.5} y={532.5} width={252} height={234} />
                <rect x={336.5} y={609.5} width={76} height={77} />
                <path d="M247.5 532.5L336.5 609.5M499.5 532.5L412.5 609.5M247.5 766.5L336.5 686.5M499.5 766.5L412.5 686.5" />
                <polyline points="250,672 262,672 273,675 283,678 295,687 307,697 318,707 330,714 342,723 348,730 352,743 357,766" />
                <path d="M228.5 532V632M228.5 665V766M215 532.5H244M215 766.5H244M224 528L233 537M224 762L233 771" />
                <path d="M247.5 771V796M499.5 771V796M247.5 784.5H354M392 784.5H499.5M243 789L252 780M495 789L504 780" />
                <path d="M250 693.5H303L317 677H347" />
                <path d="M335.5 762V730H395" />
            </g>
            <g fill="#fff">
                {[250, 261, 272, 283, 296].map((x) => (
                    <circle key={x} cx={x} cy={693.5} r={1.4} />
                ))}
                {[735, 748, 760].map((y) => (
                    <circle key={y} cx={335} cy={y} r={1.4} />
                ))}
            </g>
            <g fill="#f4f8ff" className={cjk}>
                <text x={299} y={672} fontSize={16.5}>纵向受力筋</text>
                <text x={348} y={724} fontSize={16.5}>横向受力筋</text>
                <text x={251} y={832} fontSize={27.5} letterSpacing={0.6}>四棱锥台形独立基础</text>
            </g>
            <g fill="#f4f8ff" className={serif}>
                <text x={356} y={791} fontSize={16}>1200</text>
                <text x={369} y={807} fontSize={13}>a</text>
                <text x={234} y={665} fontSize={16} transform="rotate(-90 234 665)">1200</text>
                <text x={217} y={652} fontSize={14} transform="rotate(-90 217 652)">b</text>
            </g>
            <rect x={247} y={838} width={257} height={4} fill="#fff" />
        </svg>
    );
}

// ---------- parameter dialog ----------
const paramRows = [
    { n: "a", v: "1200" },
    { n: "b", v: "1200" },
    { n: "a1", v: "600" },
    { n: "b1", v: "600" },
    { n: "h", v: "600" },
    { n: "h1", v: "600" },
];

function Cell({ selected, children }: { selected?: boolean; children: React.ReactNode }) {
    return (
        <div className={`flex h-[158px] items-center justify-center border ${selected ? "border-[#00ffff] bg-[#00ffff]" : "border-b-[#aca899] border-l-white border-r-[#aca899] border-t-white"}`}>
            {children}
        </div>
    );
}

function ParamDialog() {
    return (
        <div className="absolute left-[372px] top-0 flex h-[582px] w-[734px] flex-col border-b-[4px] border-l-[3px] border-[#0a46d0] bg-[#ece9d8]">
            <div className="-ml-[3px] flex h-[23px] shrink-0 items-start bg-gradient-to-b from-[#0a5ae2] to-[#0340c8] pl-[6px] pt-[2px] text-[13px] font-bold leading-[16px] text-white">选择参数化图形</div>
            <div className="relative flex min-h-0 flex-1">
                <div className="relative ml-[8px] mt-[15px] h-[500px] w-[481px] shrink-0 rounded-[3px] border border-[#d0ccb8] px-[5px] pt-[10px]">
                    <span className="absolute -top-[7px] left-[8px] bg-[#ece9d8] px-[1px] text-[#0046d5]">图形</span>
                    <div className="grid w-[470px] grid-cols-3 gap-x-[4px] gap-y-[4px]">
                        <Cell selected>
                            <Frustum />
                        </Cell>
                        <Cell>
                            <Cup />
                        </Cell>
                        <Cell>
                            <ThreeStep />
                        </Cell>
                        <Cell>
                            <ThreeStepCup />
                        </Cell>
                        <Cell>
                            <TwoLayer />
                        </Cell>
                        <Cell>
                            <FrustumColumn />
                        </Cell>
                        <Cell>
                            <ShortColumn />
                        </Cell>
                    </div>
                </div>
                <div className="ml-[14px] flex min-w-0 flex-1 flex-col">
                    <div className="mt-[9px] ml-[10px] h-[267px] w-[213px] border border-[#7f9db9] bg-white pl-[1px] pt-[1px]">
                        <div className="flex h-[23px] border-b border-[#bdbdbd]">
                            <div className="w-[21px] border-r border-[#bdbdbd] bg-gradient-to-b from-white to-[#e8e5d4]" />
                            <div className="flex w-[91px] items-center justify-center border-r border-[#bdbdbd] bg-gradient-to-b from-white to-[#e8e5d4]">属性名称</div>
                            <div className="flex w-[98px] items-center justify-center bg-gradient-to-b from-[#fbdda4] to-[#f3c068] text-[#6a006a]">属性值</div>
                        </div>
                        {paramRows.map((r, i) => (
                            <div key={r.n} className="flex h-[19px] w-[210px] border-b border-[#bdbdbd]">
                                <div className={`flex w-[21px] items-center justify-center border-r border-[#bdbdbd] ${mono} ${i === 0 ? "bg-[#fdd28c] text-[#6a006a]" : "bg-gradient-to-b from-white to-[#e8e5d4]"}`}>{i + 1}</div>
                                <div className={`flex w-[91px] items-center border-r border-[#bdbdbd] pl-[2px] ${mono} ${i === 0 ? "bg-[#316ac5] text-white" : ""}`}>
                                    {r.n}(mm)
                                </div>
                                <div className={`flex flex-1 items-center pl-[1px] ${mono} ${i === 0 ? "bg-[#dfe8f6]" : ""}`}>{r.v}</div>
                            </div>
                        ))}
                    </div>
                    <div className="relative mt-[11px] h-[227px] w-[226px] rounded-l-[3px] border border-r-0 border-[#d0ccb8] pl-[9px] pt-[11px]">
                        <span className="absolute -top-[7px] left-[7px] bg-[#ece9d8] px-[1px] text-[#0046d5]">大图预览</span>
                        <Frustum size={210} />
                    </div>
                    <div className="mt-[11px] ml-[66px] flex gap-[15px]">
                        <button className="h-[23px] w-[72px] rounded-[3px] border border-[#003c74] bg-gradient-to-b from-white to-[#ecebe0] shadow-[inset_0_0_0_2px_#a8c4ee]">确定</button>
                        <button className="h-[23px] w-[72px] rounded-[3px] border border-[#003c74] bg-gradient-to-b from-white to-[#ecebe0]">取消</button>
                    </div>
                </div>
            </div>
        </div>
    );
}

// ---------- menus ----------
const menus: [string, string][] = [
    ["文件", "(F)"],
    ["编辑", "(E)"],
    ["楼层", "(L)"],
    ["构件", "(N)"],
    ["绘图", "(D)"],
    ["修改", "(M)"],
    ["钢筋量", "(Q)"],
];

function MenuBar() {
    return (
        <div className="flex h-[24px] items-center pb-[3px] pl-[5px]">
            {menus.map(([n, c]) => (
                <span key={n} className="w-[52px] shrink-0 whitespace-nowrap">
                    {n}
                    <span className={mono}>{c}</span>
                </span>
            ))}
        </div>
    );
}

function Caret({ c = "#000" }: { c?: string }) {
    return (
        <svg width="6" height="4" viewBox="0 0 6 4">
            <path d="M0 0H6L3 3.5Z" fill={c} />
        </svg>
    );
}

function ToolBar() {
    return (
        <div className="flex h-[29px] items-start pt-[2px]">
            <div className="flex h-[25px] w-[157px] shrink-0 items-center rounded-r bg-[#f4f2e8] pl-[5px]">
                <svg width="13" height="16" viewBox="0 0 13 16">
                    <path d="M1 1H8L12 5V15H1Z" fill="#fff" stroke="#808080" />
                    <path d="M8 1V5H12" fill="#e0e0e0" stroke="#808080" />
                </svg>
                <svg width="18" height="16" viewBox="0 0 18 16" className="ml-[8px]">
                    <path d="M1 14V5H7L8 7H13V14Z" fill="#f2d88c" stroke="#b08a30" />
                    <path d="M1 14L4 8H17L13 14Z" fill="#f8e2a0" stroke="#b08a30" />
                    <path d="M10 4C11 2 13 1 15 2" fill="none" stroke="#3a7ac8" />
                </svg>
                <span className="ml-[3px]">
                    <Caret />
                </span>
                <svg width="15" height="15" viewBox="0 0 15 15" className="ml-[6px]">
                    <rect x=".5" y=".5" width="14" height="14" rx="1" fill="#3a50b8" stroke="#223088" />
                    <rect x="3" y="1" width="9" height="6" fill="#dfe6fa" />
                    <rect x="4" y="9.5" width="7" height="5" fill="#8a94b0" />
                </svg>
                <span className="mx-[6px] h-[18px] w-px bg-[#c8c4b0]" />
                <svg width="14" height="15" viewBox="0 0 14 15">
                    <path d="M2 2V8H8M2 8C4 3 12 3 12 9C12 11 11 13 9 14" fill="none" stroke="#2f6fd8" strokeWidth={2.4} />
                </svg>
                <span className="ml-[6px]">
                    <Caret />
                </span>
                <svg width="14" height="15" viewBox="0 0 14 15" className="ml-[6px]">
                    <path d="M12 2V8H6M12 8C10 3 2 3 2 9C2 11 3 13 5 14" fill="none" stroke="#c4c8c4" strokeWidth={2.4} />
                </svg>
                <span className="ml-[6px]">
                    <Caret c="#a8a8a8" />
                </span>
            </div>
            <div className="ml-[3px] flex h-[25px] w-[212px] shrink-0 items-center rounded-l bg-[#f4f2e8] pl-[4px]">
                <svg width="15" height="13" viewBox="0 0 15 13">
                    <rect x=".5" y=".5" width="14" height="12" fill="#dfe8f6" stroke="#3a60a8" />
                    <path d="M1 4H14M8 4V12M2 7H7M2 10H7M9 7H13M9 10H13" stroke="#3a60a8" />
                </svg>
                <span className="ml-[5px] text-[13px]">定义</span>
                <span className="ml-[10px] font-['Liberation_Sans',sans-serif] text-[13px] font-bold">Σ</span>
                <span className="ml-[7px] text-[13px]">汇总计算</span>
                <svg width="16" height="16" viewBox="0 0 16 16" className="ml-[7px]">
                    <rect width="16" height="16" rx="2" fill="#2d8fe0" />
                    <circle cx="8" cy="9" r="5" fill="#fff" />
                    <path d="M5 9L7.5 11L11 7" fill="none" stroke="#2d8fe0" strokeWidth={1.5} />
                </svg>
                <span className="ml-[3px] text-[13px]">云检查</span>
                <svg width="14" height="15" viewBox="0 0 14 15" className="ml-[6px]">
                    <path d="M1 14V6L9 1L13 4V14Z" fill="#e0dcc8" stroke="#b0ac98" />
                </svg>
            </div>
        </div>
    );
}

// ---------- hand-drawn marks on top ----------
function Annotations() {
    return (
        <svg width="1106" height="888" viewBox="0 0 1106 888" className="pointer-events-none absolute inset-0">
            <defs>
                <linearGradient id="fadeArrow" gradientUnits="userSpaceOnUse" x1="1000" y1="142" x2="700" y2="410">
                    <stop offset="0" stopColor="#f04040" stopOpacity="0.08" />
                    <stop offset="1" stopColor="#f04040" />
                </linearGradient>
            </defs>
            <ellipse cx={440} cy={11} rx={101} ry={20} fill="none" stroke="#f23b3f" strokeWidth={6} />
            <ellipse cx={506.5} cy={145} rx={51.5} ry={37} fill="none" stroke="#e04848" />
            <ellipse cx={1020.5} cy={112.5} rx={39.5} ry={51.5} fill="none" stroke="#f06a6a" />
            <ellipse cx={374} cy={651} rx={75} ry={56} fill="none" stroke="#9a2626" />
            <polygon points="551,174 944,120 946,126.5 551,175" fill="#f23b3f" />
            <polygon points="963,122.5 944,115.5 947,129" fill="#f23b3f" />
            <polygon points="1000,142 1000.5,142.5 461.5,630.5 458.5,627.5" fill="url(#fadeArrow)" />
            <polygon points="450,637 457,620 468,630" fill="#f04040" />
        </svg>
    );
}

export default function App() {
    return (
        <div className={`relative h-[888px] w-[1106px] overflow-hidden bg-[#ece9d8] text-[12px] leading-none text-black ${cjk}`}>
            <MenuBar />
            <ToolBar />
            <div className="flex h-[835px]">
                <NavPanel />
                <ListPanel />
                <CadArea />
            </div>
            <PropertyWindow />
            <svg width="60" height="26" viewBox="0 0 60 26" className="absolute left-[385px] top-[862px]">
                <rect x="3" y="0" width="4" height="26" fill="#0a78e8" />
                <path d="M7 25H46" stroke="#e01010" strokeWidth={2} />
                <path d="M14 18L17 21L20 18M17 21V25" fill="none" stroke="#20d020" />
                <path d="M43 19L49 25M49 19L43 25" stroke="#e01010" />
            </svg>
            <ParamDialog />
            <Annotations />
        </div>
    );
}
